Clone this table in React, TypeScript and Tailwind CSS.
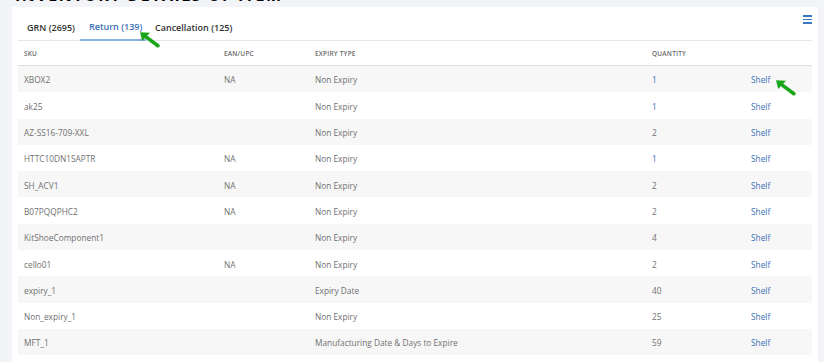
import React from "react";

const rows = [
  { sku: "XBOX2", ean: "NA", type: "Non Expiry", qty: "1", blue: true },
  { sku: "ak25", ean: "", type: "Non Expiry", qty: "1", blue: true },
  { sku: "AZ-SS16-709-XXL", ean: "", type: "Non Expiry", qty: "2", blue: false },
  { sku: "HTTC10DN1SAPTR", ean: "NA", type: "Non Expiry", qty: "1", blue: true },
  { sku: "SH_ACV1", ean: "NA", type: "Non Expiry", qty: "2", blue: false },
  { sku: "B07PQQPHC2", ean: "NA", type: "Non Expiry", qty: "2", blue: false },
  { sku: "KitShoeComponent1", ean: "", type: "Non Expiry", qty: "4", blue: false },
  { sku: "cello01", ean: "NA", type: "Non Expiry", qty: "2", blue: false },
  { sku: "expiry_1", ean: "", type: "Expiry Date", qty: "40", blue: false },
  { sku: "Non_expiry_1", ean: "", type: "Non Expiry", qty: "25", blue: false },
  { sku: "MFT_1", ean: "", type: "Manufacturing Date & Days to Expire", qty: "59", blue: false },
];

function Arrow({ className }: { className: string }) {
  return (
    <svg className={className} viewBox="0 0 20 16" width="21" height="17">
      <line x1="18" y1="14" x2="6" y2="5" stroke="#19a619" strokeWidth="3.4" strokeLinecap="round" />
      <polygon points="1,1 10.5,1.5 3,9.5" fill="#19a619" />
    </svg>
  );
}

export default function App() {
  return (
    <div
      className="relative w-[828px] h-[362px] overflow-hidden bg-[#f3f4f7] flex"
      style={{ fontFamily: '"Open Sans", "Noto Sans", sans-serif' }}
    >
      <div className="absolute left-[15px] top-[-13.5px] text-[16px] font-bold text-black tracking-[1.5px] leading-[16px]">
        INVENTORY DETAILS OF ITEM
      </div>
      <div className="ml-[12px] mt-[7px] w-[806px] bg-white px-[6px] relative flex flex-col">
        <div className="absolute right-[6px] top-[8px] flex flex-col gap-[2px] w-[9px]">
          <div className="h-[1.5px] bg-[#3a78c0]" />
          <div className="h-[1.5px] bg-[#3a78c0]" />
          <div className="h-[1.5px] bg-[#3a78c0]" />
        </div>
        <div className="h-[34px] flex border-b border-[#e6e6e6] text-[9px] font-semibold">
          <div className="w-[62px] flex items-center pt-[8px] pl-[9px] text-[#333]">GRN (2695)</div>
          <div className="w-[66px] flex items-center pt-[8px] pl-[9px] text-[#3b6fb8] border-b-2 border-[#8ab0e2] mb-[-1px]">
            Return (139)
          </div>
          <div className="flex items-center pt-[8px] pl-[9px] text-[#333]">Cancellation (125)</div>
        </div>
        <div className="grid grid-cols-[200px_91px_337px_99px_1fr] h-[25px] pt-[2px] items-center border-b border-[#dedede] text-[6.5px] font-semibold text-[#6a6a6a] tracking-[0.2px]">
          <div className="pl-[6px]">SKU</div>
          <div className="pl-[6px]">EAN/UPC</div>
          <div className="pl-[6px]">EXPIRY TYPE</div>
          <div className="pl-[6px]">QUANTITY</div>
          <div />
        </div>
        {rows.map((r, i) => (
          <div
            key={i}
            className={
              "grid grid-cols-[200px_91px_337px_99px_1fr] h-[26.3px] pt-[3px] items-center text-[8.3px] text-[#707070] " +
              (i % 2 === 0 ? "bg-[#f7f7f7]" : "bg-white")
            }
          >
            <div className="pl-[6px]">{r.sku}</div>
            <div className="pl-[6px]">{r.ean}</div>
            <div className="pl-[6px]">{r.type}</div>
            <div className={"pl-[6px] " + (r.blue ? "text-[#3b6fb8]" : "")}>{r.qty}</div>
            <div className="pl-[6px] text-[#3b6fb8]">Shelf</div>
          </div>
        ))}
      </div>
      <div className="ml-[6px] w-[4px] bg-white" />
      <Arrow className="absolute left-[139px] top-[31px]" />
      <Arrow className="absolute left-[775px] top-[79px]" />
    </div>
  );
}
